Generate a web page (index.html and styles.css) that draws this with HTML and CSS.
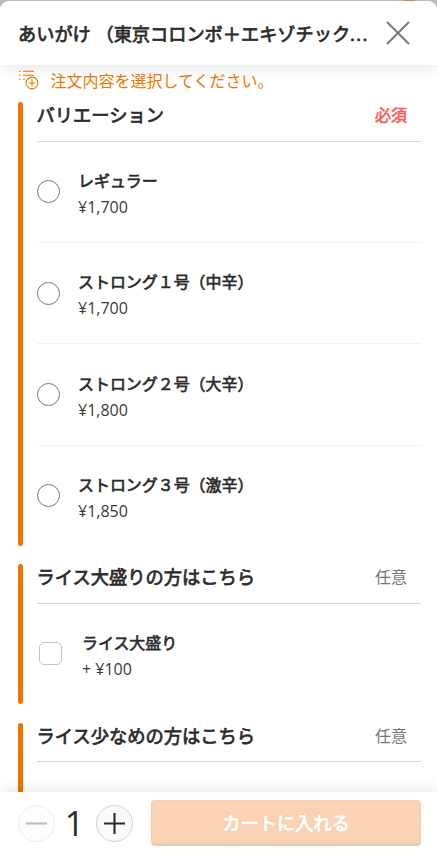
FILE: index.html
```
<!DOCTYPE html>
<html lang="ja">
<head>
<meta charset="utf-8">
<title>注文内容</title>
<link rel="stylesheet" href="styles.css">
</head>
<body>
<div class="backdrop-mark"></div>
<div class="sheet">
  <header class="top">
    <h1 class="title">あいがけ （東京コロンボ＋エキゾチック<span class="dots">...</span></h1>
    <svg class="close" viewBox="0 0 24 24"><path d="M1 1L23 23M23 1L1 23"/></svg>
  </header>
  <main class="content">
    <p class="notice">
      <svg class="notice-icon" viewBox="0 0 20 20"><path d="M0 1.3h1.5M4 1.3h11M0 5.3h1.5M4 5.3h11M0 9.3h1.5M4 9.3h2"/><circle cx="13" cy="13" r="5.9"/><path d="M9.5 13h7M13 9.5v7"/></svg>
      <span>注文内容を選択してください。</span>
    </p>
    <section class="group">
      <div class="group-head"><h2>バリエーション</h2><span class="tag required">必須</span></div>
      <div class="option"><i class="radio"></i><div class="label"><div class="name">レギュラー</div><div class="price">¥1,700</div></div></div>
      <div class="option"><i class="radio"></i><div class="label"><div class="name">ストロング１号（中辛）</div><div class="price">¥1,700</div></div></div>
      <div class="option"><i class="radio"></i><div class="label"><div class="name">ストロング２号（大辛）</div><div class="price">¥1,800</div></div></div>
      <div class="option"><i class="radio"></i><div class="label"><div class="name">ストロング３号（激辛）</div><div class="price">¥1,850</div></div></div>
    </section>
    <section class="group">
      <div class="group-head"><h2>ライス大盛りの方はこちら</h2><span class="tag">任意</span></div>
      <div class="option"><i class="check"></i><div class="label"><div class="name">ライス大盛り</div><div class="price">+ ¥100</div></div></div>
    </section>
    <section class="group">
      <div class="group-head"><h2>ライス少なめの方はこちら</h2><span class="tag">任意</span></div>
      <div class="option"></div>
    </section>
  </main>
  <footer class="bottom">
    <button class="step off"><svg viewBox="0 0 20 20"><path d="M0 10h20"/></svg></button>
    <span class="count">1</span>
    <button class="step"><svg viewBox="0 0 20 20"><path d="M0 10h20M10 0v20"/></svg></button>
    <button class="cart">カートに入れる</button>
  </footer>
</div>
</body>
</html>
```
FILE: styles.css
```
* { box-sizing: border-box; }
body {
  margin: 0;
  height: 855px;
  overflow: hidden;
  background: #b9b9b9;
  color: #2b2b2b;
  font-family: "Open Sans", "Noto Sans CJK JP", sans-serif;
}
h1, h2, p { margin: 0; }
svg { fill: none; stroke: currentColor; display: block; }
.backdrop-mark {
  width: 11px;
  height: 1px;
  margin-left: 404px;
  background: #c68a5c;
}
.sheet {
  height: 854px;
  display: flex;
  flex-direction: column;
  overflow: hidden;
  border-radius: 9px 9px 0 0;
  background: #fff;
}
.top {
  height: 64px;
  flex: none;
  display: flex;
  align-items: center;
  padding: 0 27px 0 18px;
  background: #fff;
  box-shadow: 0 0 18px rgba(0, 0, 0, .13);
  z-index: 1;
}
.title {
  flex: 1;
  padding-top: 1px;
  white-space: nowrap;
  font-size: 18.2px;
  line-height: 26px;
  font-weight: 400;
  -webkit-text-stroke: .75px currentColor;
}
.dots { letter-spacing: 1.4px; }
.close { width: 24px; height: 24px; color: #777; stroke-width: 1.9; }
.content { flex: 1; min-height: 0; overflow: hidden; padding: 0 16px 0 18px; }
.notice {
  height: 37px;
  display: flex;
  gap: 11.5px;
  padding: 5px 0 0 1px;
  color: #ee7700;
  font-size: 16px;
  line-height: 22px;
}
.notice-icon { width: 20px; height: 20px; stroke-width: 1.1; }
.group {
  position: relative;
  margin-bottom: 18.7px;
  padding-left: 18.5px;
}
.group::before {
  content: "";
  position: absolute;
  left: 0;
  top: 0;
  bottom: 0;
  width: 5px;
  border-radius: 2.5px;
  background: #f07300;
}
.group-head {
  height: 39.6px;
  display: flex;
  justify-content: space-between;
  align-items: flex-start;
  padding-right: 14px;
  border-bottom: 1px solid #d6d6d6;
}
h2 { font-size: 18.25px; line-height: 25px; font-weight: 400; -webkit-text-stroke: .75px currentColor; }
.tag { font-size: 16px; line-height: 27px; color: #777; }
.required { color: #f4605d; -webkit-text-stroke: .6px currentColor; }
.option {
  height: 101.4px;
  display: flex;
  align-items: center;
  gap: 18.5px;
  border-bottom: 1px solid #f1f1f1;
}
.option:last-child { height: 99.9px; border-bottom: 0; }
.label { padding-top: 5px; }
.name { font-size: 15.95px; line-height: 26px; -webkit-text-stroke: .65px currentColor; }
.price { font-size: 16px; line-height: 27px; color: #3a3a3a; }
.radio { width: 23px; height: 23px; border: 1px solid #777; border-radius: 50%; }
.check { width: 23px; height: 23px; margin: 0 2px; border: 1px solid #c4c4c4; border-radius: 5px; }
.bottom {
  height: 63.5px;
  flex: none;
  display: flex;
  align-items: center;
  padding: 0 16px 0 18px;
  background: #fff;
  box-shadow: 0 0 14px rgba(0, 0, 0, .12);
  z-index: 1;
}
.step {
  width: 37px;
  height: 37px;
  padding: 0;
  display: grid;
  place-items: center;
  border: 1px solid #d2d2d2;
  border-radius: 50%;
  background: #fafafa;
  color: #2b2b2b;
}
.step svg { width: 21px; height: 21px; stroke-width: 2; }
.step.off { border-color: #eee; background: #fdfdfd; color: #bdbdbd; }
.count { width: 41px; padding-right: 2px; text-align: center; font-size: 34px; line-height: 40px; }
.cart {
  flex: 1;
  height: 46px;
  margin-left: 18px;
  padding: 0;
  border: 1px solid #f3cfae;
  border-bottom: 3px solid #efcbad;
  border-radius: 4px;
  background: #f9d3b3;
  color: #fff;
  font: 400 18.2px "Open Sans", "Noto Sans CJK JP", sans-serif;
  -webkit-text-stroke: .75px currentColor;
}
```
